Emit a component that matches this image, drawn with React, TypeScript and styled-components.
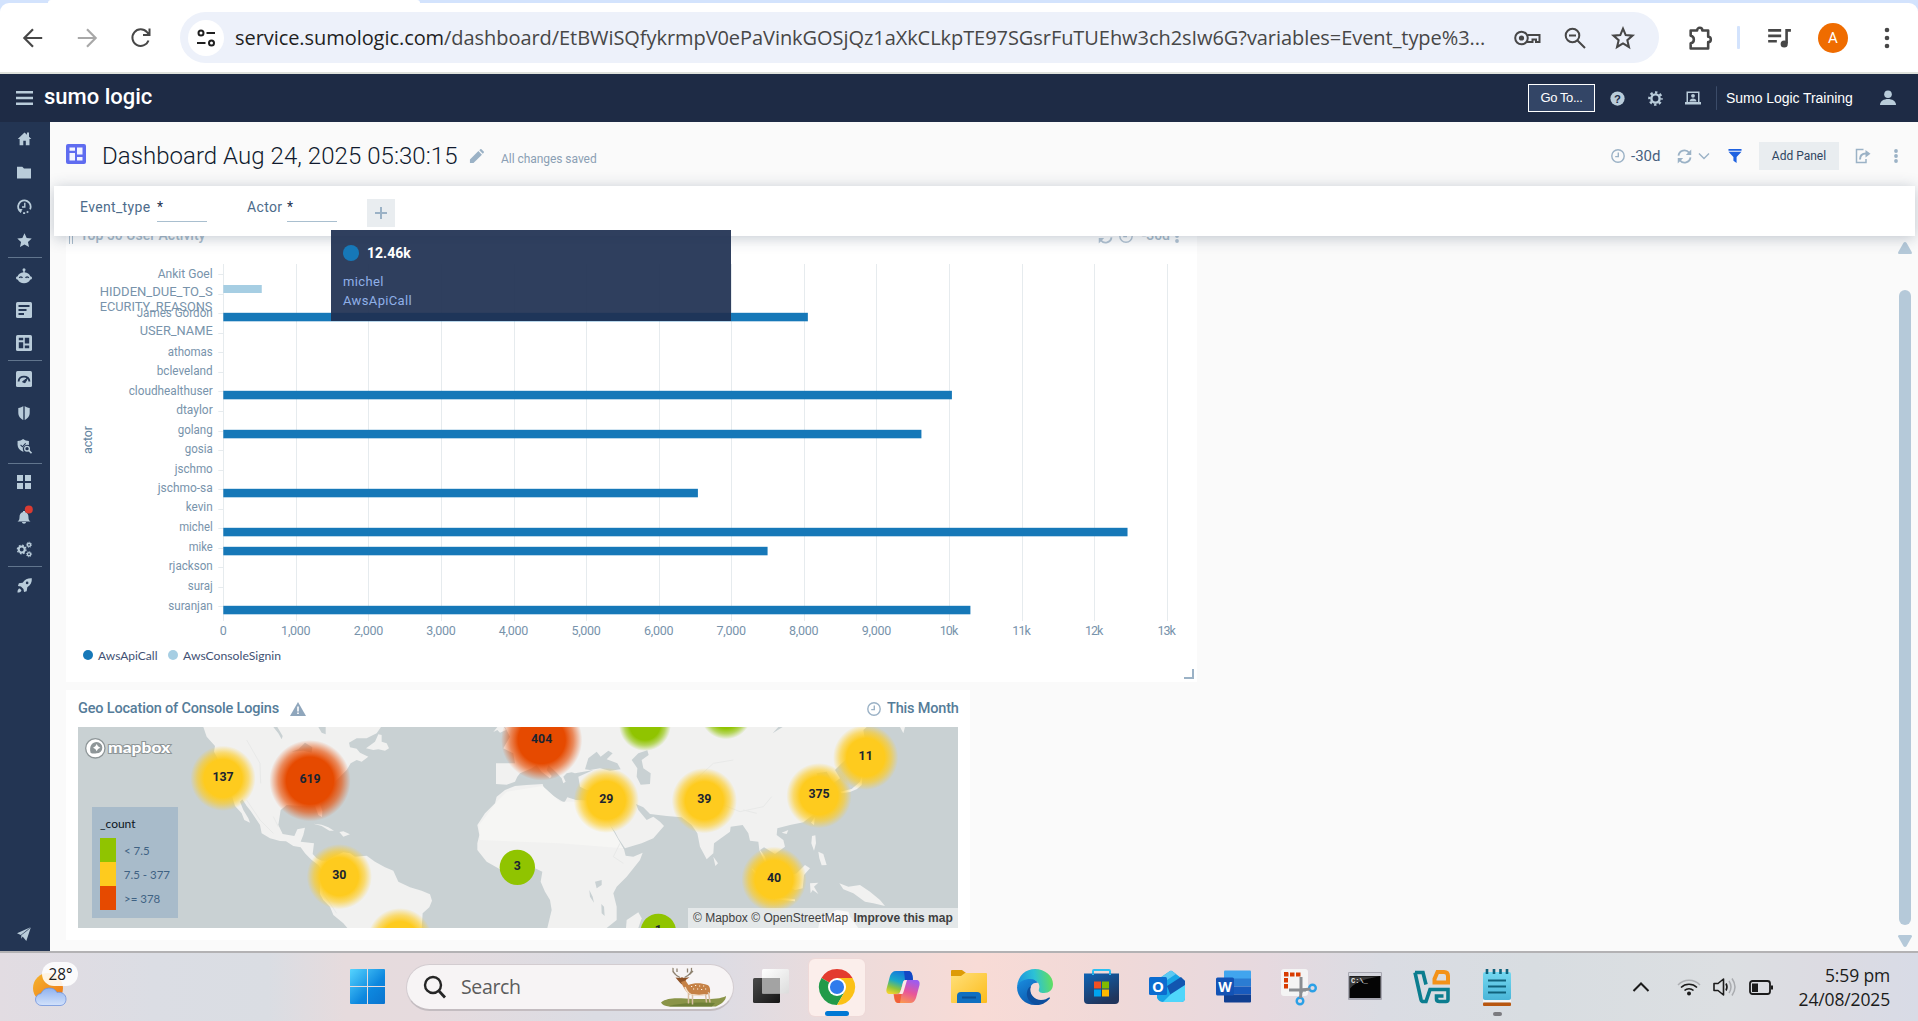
import React from "react";
import styled, { createGlobalStyle } from "styled-components";

const ui = `Roboto, "Liberation Sans", sans-serif`;
const arial = `"Liberation Sans", Arial, sans-serif`;
const win = `"Open Sans", "Noto Sans", sans-serif`;

const Global = createGlobalStyle`
  *, *::before, *::after { box-sizing: border-box; }
  body { margin: 0; background: #fafafa; font-family: ${ui}; overflow: hidden; }
  svg { display: block; flex: none; overflow: visible; }
`;

const Screen = styled.div`
  width: 1918px;
  height: 1021px;
  display: flex;
  flex-direction: column;
  overflow: hidden;
`;

const Row = styled.div<{ $ml?: number; $gap?: number }>`
  display: flex;
  align-items: center;
  flex: none;
  margin-left: ${(p) => p.$ml ?? 0}px;
  gap: ${(p) => p.$gap ?? 0}px;
`;

const Push = styled.div`
  flex: 1;
`;

const Slot = styled.div<{ $w: number }>`
  width: ${(p) => p.$w}px;
  flex: none;
  display: flex;
  align-items: center;
  justify-content: center;
`;

/* ---------- browser chrome ---------- */

const TabStrip = styled.div`
  height: 3px;
  flex: none;
  background: #d3e3fd;
  padding-left: 48px;
`;
const ActiveTab = styled.div`
  width: 372px;
  height: 3px;
  background: #fff;
  border-radius: 3px 3px 0 0;
`;
const StripBack = styled.div`
  background: #d3e3fd;
  flex: none;
`;
const BrowserBar = styled.div`
  height: 69px;
  background: #fff;
  border-radius: 9px 9px 0 0;
  display: flex;
  align-items: center;
`;
const ChromeEdge = styled.div`
  height: 2px;
  flex: none;
  background: #dfe2dc;
`;
const Omnibox = styled.div`
  width: 1479px;
  height: 51px;
  border-radius: 26px;
  background: #edf1fa;
  display: flex;
  align-items: center;
  padding-left: 8px;
`;
const SiteInfo = styled.div`
  width: 36px;
  height: 36px;
  flex: none;
  border-radius: 50%;
  background: #fff;
  display: flex;
  align-items: center;
  justify-content: center;
`;
const Url = styled.div`
  margin-left: 11px;
  width: 1277px;
  flex: none;
  white-space: nowrap;
  font: 400 20px/28px ${win};
  letter-spacing: -0.06px;
  color: #474747;
  b {
    font-weight: 400;
    color: #1f1f1f;
  }
`;
const Avatar = styled.div`
  width: 30px;
  height: 30px;
  border-radius: 50%;
  background: #ef6c00;
  color: #fff;
  font: 400 15px/30px ${ui};
  text-align: center;
`;
const VRule = styled.div<{ $h: number; $w: number; $c: string }>`
  width: ${(p) => p.$w}px;
  height: ${(p) => p.$h}px;
  background: ${(p) => p.$c};
  border-radius: 1px;
  flex: none;
`;

/* ---------- app header ---------- */

const Header = styled.header`
  height: 48px;
  flex: none;
  background: #1e2b45;
  display: flex;
  align-items: center;
  padding-left: 16px;
`;
const Brand = styled.div`
  margin: -2px 0 0 11px;
  font: 500 22px/28px ${ui};
  letter-spacing: 0;
  color: #fff;
`;
const GoTo = styled.div`
  width: 67px;
  height: 28px;
  border: 1px solid #fff;
  background: #334566;
  color: #fff;
  font: 400 13px/26px ${arial};
  letter-spacing: -0.4px;
  text-align: center;
`;
const Account = styled.div`
  width: 129px;
  white-space: nowrap;
  font: 400 14px/20px ${arial};
  letter-spacing: -0.05px;
  color: #fff;
`;

/* ---------- body ---------- */

const Body = styled.div`
  height: 829px;
  flex: none;
  display: flex;
`;
const Side = styled.nav`
  width: 50px;
  background: #233553;
  display: flex;
  flex-direction: column;
  align-items: center;
  padding: 0 2px 0 0;
`;
const SideItem = styled.div`
  height: 33.8px;
  flex: none;
  display: flex;
  align-items: center;
  justify-content: center;
`;
const SideRule = styled.div`
  width: 34px;
  height: 1px;
  flex: none;
  margin: 0 0 0.7px 2px;
  background: #61758d;
`;
const Main = styled.main`
  flex: 1;
  background: #fafafa;
  display: flex;
  flex-direction: column;
  min-width: 0;
  overflow: hidden;
`;
const TitleBar = styled.div`
  height: 64px;
  flex: none;
  display: flex;
  align-items: center;
  padding: 4px 0 0 16px;
`;
const DashMark = styled.div`
  margin-top: -4px;
`;
const Title = styled.h1`
  margin: 0 0 0 16px;
  width: 359px;
  white-space: nowrap;
  font: 300 24px/30px ${ui};
  letter-spacing: 0.05px;
  color: #101a2e;
`;
const Saved = styled.div`
  margin: 6px 0 0 17px;
  font: 400 12px/16px ${ui};
  letter-spacing: -0.05px;
  color: #8b9fb4;
`;
const Range = styled.div`
  font: 400 15px/18px ${ui};
  color: #47617f;
  width: 31px;
  white-space: nowrap;
`;
const AddPanel = styled.div`
  width: 80px;
  height: 28px;
  background: #e9edf0;
  color: #2f4561;
  font: 400 12px/28px ${ui};
  text-align: center;
`;
const FilterBar = styled.div`
  height: 50px;
  flex: none;
  margin: 0 3px 0 4px;
  background: #fff;
  box-shadow: 0 2px 14px rgba(40, 60, 90, 0.28);
  z-index: 2;
  display: flex;
  align-items: flex-start;
  padding: 13px 0 0 26px;
`;
const FilterName = styled.div<{ $w: number }>`
  width: ${(p) => p.$w}px;
  margin-top: -1px;
  font: 400 14px/18px ${ui};
  letter-spacing: 0.35px;
  color: #4d6c8b;
  white-space: nowrap;
`;
const FilterValue = styled.div`
  width: 50px;
  height: 24px;
  margin-top: -1px;
  padding-bottom: 1px;
  border-bottom: 1px solid #a9bfcf;
  font: 400 14px/18px ${ui};
  color: #1f3350;
`;
const Plus = styled.div`
  width: 28px;
  height: 28px;
  background: #e9edf0;
  display: flex;
  align-items: center;
  justify-content: center;
`;
const Scroller = styled.div`
  flex: 1;
  min-height: 0;
  display: flex;
`;
const Panels = styled.div`
  flex: 1;
  padding-left: 16px;
`;
const ChartPanel = styled.section`
  width: 1131px;
  height: 458px;
  margin-top: -12px;
  background: #fff;
  display: flex;
  flex-direction: column;
`;
const GhostHead = styled.div`
  height: 24px;
  flex: none;
  display: flex;
  align-items: center;
  padding-left: 3px;
  color: #a9bccb;
`;
const GhostTitle = styled.div<{ $ml?: number }>`
  margin: -2px 0 0 ${(p) => p.$ml ?? 0}px;
  font: 500 14px/18px ${ui};
`;
const MapPanel = styled.section`
  width: 904px;
  height: 250px;
  margin-top: 8px;
  background: #fff;
  padding: 0 12px;
  display: flex;
  flex-direction: column;
`;
const MapHead = styled.div`
  height: 37px;
  display: flex;
  align-items: center;
  color: #557c99;
`;
const PanelTitle = styled.div<{ $w: number }>`
  width: ${(p) => p.$w}px;
  white-space: nowrap;
  font: 500 14.5px/18px ${ui};
  letter-spacing: -0.18px;
`;
const MapBox = styled.div`
  position: relative;
  width: 880px;
  height: 201px;
  overflow: hidden;
  background: #c9d1d3;
`;
const MapLegend = styled.div`
  position: absolute;
  left: 14px;
  top: 80px;
  width: 86px;
  height: 111px;
  background: #a8bbca;
  padding: 8px 8px 0;
  font: 400 11.5px/17px Lato, sans-serif;
  color: #0c1522;
`;
const LegendRow = styled.div<{ $c: string }>`
  height: 24px;
  display: flex;
  align-items: center;
  gap: 8px;
  color: #3f6283;
  white-space: nowrap;
  &::before {
    content: "";
    width: 16px;
    height: 24px;
    background: ${(p) => p.$c};
  }
`;
const LegendTitle = styled.div`
  height: 23px;
  font-size: 12px;
`;
const Attribution = styled.div`
  position: absolute;
  right: 0;
  bottom: 0;
  width: 270px;
  height: 20px;
  background: rgba(255, 255, 255, 0.5);
  color: #404040;
  font: 400 12px/20px ${arial};
  white-space: nowrap;
  padding-left: 5px;
  b {
    margin-left: 2px;
  }
`;
const ScrollTrack = styled.div`
  width: 24px;
  margin-right: 3px;
  display: flex;
  flex-direction: column;
  align-items: center;
  padding: 6px 0 3px 3px;
`;
const Thumb = styled.div`
  width: 12px;
  height: 635px;
  margin: 36px 0 10px;
  border-radius: 6px;
  background: #b5c9d9;
`;
const Tooltip = styled.div`
  position: absolute;
  left: 331px;
  top: 230px;
  z-index: 5;
  width: 400px;
  height: 91px;
  background: rgba(31, 48, 82, 0.93);
  color: #8fb0e8;
  padding: 13px 12px;
  font: 400 13px/19px ${ui};
  letter-spacing: 0.35px;
`;
const TipValue = styled.div`
  display: flex;
  align-items: center;
  gap: 8px;
  height: 20px;
  margin-bottom: 9px;
  font-weight: 700;
  font-size: 14px;
  letter-spacing: 0;
  color: #fff;
  &::before {
    content: "";
    width: 16px;
    height: 16px;
    border-radius: 50%;
    background: #1678b8;
  }
`;

/* ---------- task bar ---------- */

const TaskBar = styled.footer`
  height: 70px;
  flex: none;
  border-top: 2px solid #b3b2b4;
  background: linear-gradient(
    90deg,
    #e2dce2 0%,
    #dbdde4 8%,
    #dadde3 14%,
    #e6dbdd 18%,
    #e6dbde 22%,
    #dbdce3 31%,
    #dcdce4 37%,
    #eedbda 45%,
    #f8dbd6 51%,
    #f0d9d8 58%,
    #e6d9df 66%,
    #dadce3 72%,
    #d8dde1 80%,
    #dcdfe2 90%,
    #dcdbe2 95%,
    #d8dbe6 100%
  );
  display: flex;
  align-items: center;
`;
const Weather = styled.div`
  width: 300px;
  padding: 0 0 5px 30px;
  margin-right: 34px;
`;
const SearchBox = styled.div`
  width: 328px;
  height: 47px;
  margin: 0 4px 0 6px;
  border-radius: 24px;
  border: 1px solid #d3ccd0;
  border-bottom: 2px solid #c3bcc0;
  background: #f7f4f5;
  display: flex;
  align-items: center;
  padding: 0 6px 0 16px;
  font: 400 19.5px/28px ${win};
  letter-spacing: -0.35px;
  color: #5c5c5c;
`;
const TaskItem = styled.div<{ $active?: boolean; $drop?: number }>`
  width: ${(p) => (p.$active ? 56 : 66)}px;
  height: 57px;
  margin: 0 ${(p) => (p.$active ? 5 : 0)}px;
  border-radius: 6px;
  background: ${(p) => (p.$active ? "#fbeeeb" : "none")};
  box-shadow: ${(p) => (p.$active ? "0 0 0 1px #eed9d8" : "none")};
  display: flex;
  flex-direction: column;
  align-items: center;
  padding-top: ${(p) => 10 + (p.$drop ?? 0)}px;
`;
const Running = styled.div<{ $w: number; $c: string }>`
  width: ${(p) => p.$w}px;
  height: 5px;
  margin-top: 6px;
  border-radius: 3px;
  background: ${(p) => p.$c};
`;
const Clock = styled.div`
  width: 100px;
  margin: -1px 28px 0 17px;
  text-align: right;
  font: 400 17.5px/24px ${win};
  letter-spacing: -0.15px;
  color: #1b1b1b;
`;

/* ---------- icons ---------- */

type IconProps = { s?: number; c?: string; children?: React.ReactNode; vb?: string; h?: number };
const Fill = ({ s = 16, h, c = "#b9ccda", vb = "0 0 16 16", children }: IconProps) => (
  <svg width={s} height={h ?? s} viewBox={vb} fill={c}>{children}</svg>
);
const Line = ({ s = 24, h, c = "#474747", vb = "0 0 24 24", children }: IconProps) => (
  <svg width={s} height={h ?? s} viewBox={vb} fill="none" stroke={c} strokeWidth="2">{children}</svg>
);

const ClockIcon = ({ s = 14, c = "#9bb2c6" }: IconProps) => (
  <Line s={s} c={c} vb="0 0 14 14"><g strokeWidth="1.4"><circle cx="7" cy="7" r="6.2" /><path d="M7.3 3.5V7.6H4.2" /></g></Line>
);
const RefreshIcon = ({ s = 15, c = "#9bb2c6" }: IconProps) => (
  <Line s={s} c={c} vb="0 0 16 16">
    <path d="M1.6 7A6.4 6.4 0 0 1 13 4M14.4 9A6.4 6.4 0 0 1 3 12" strokeWidth="2" />
    <path d="M15.200 0.600V6.400H9.400ZM.8 15.400V9.600H6.600Z" fill={c} stroke="none" />
  </Line>
);
const DotsIcon = ({ c = "#9bb2c6", r = 1.9, gap = 5 }: { c?: string; r?: number; gap?: number }) => (
  <svg width="6" height={gap * 2 + 6} fill={c}>
    {[0, 1, 2].map((i) => <circle key={i} cx="3" cy={3 + i * gap} r={r} />)}
  </svg>
);
const DashGlyph = ({ bg, fg, s = 16 }: { bg: string; fg: string; s?: number }) => (
  <svg width={s} height={s} viewBox="0 0 20 20">
    <rect width="20" height="20" rx="2" fill={bg} />
    <path d="M3.5 3.5h5.5v3.200H3.5zM3.500 9h5.500v7.500H3.5zM11 3.500h5.500v7H11zM11 13h5.500v3.500H11z" fill={fg} />
  </svg>
);

const Gear = ({ s = 16, c = "#b9ccda" }: IconProps) => (
  <svg width={s} height={s} viewBox="0 0 16 16">
    <g fill="none" stroke={c}>
      <circle cx="8" cy="8" r="4.400" strokeWidth="2.600" />
      <circle cx="8" cy="8" r="6.500" strokeWidth="2.600" strokeDasharray="2.550 2.550" strokeDashoffset="1.270" />
    </g>
  </svg>
);

const HomeIcon = () => (
  <Fill s={15}><path d="M8 1.600L.8 8.600h2V15.200h3.900V10.400h2.700v4.800h3.900V8.600h2L12.800 6V1.700h-2.200v2.200z" /></Fill>
);
const FolderIcon = () => <Fill s={14} h={13} vb="0 0 14 13"><path d="M0 .7h5.300L7 2.500h7v10H0z" /></Fill>;
const HistoryIcon = () => (
  <Line s={15} c="#b9ccda" vb="0 0 16 16">
    <path d="M4.500 14A6.700 6.700 0 1 1 14 11" strokeWidth="1.900" />
    <path d="M8.300 4v4.500H5.300" strokeWidth="1.500" />
    <path d="M6.500 15h2.200M10.300 14.300l1.800-.9" strokeWidth="1.800" />
    <path d="M2 10.500l4 .5-2.500 3.500z" fill="#b9ccda" stroke="none" />
  </Line>
);
const StarIcon = () => <Fill s={15}><path d="M8 .3l2.300 5 5.400.6-4 3.700 1.100 5.400L8 12.300 3.200 15l1.100-5.400-4-3.700 5.400-.6z" /></Fill>;
const RobotIcon = () => (
  <Fill>
    <circle cx="8" cy="1.800" r="1.500" /><path d="M7.300 2h1.400v4H7.300z" />
    <path d="M8 4.500c4 0 5.800 1.900 6.200 3.800 1 .2 1.800.8 1.800 1.700 0 1-.8 1.500-1.900 1.700-.8 2-3.200 3.600-6.100 3.600s-5.300-1.600-6.100-3.600C.8 11.500 0 11 0 10c0-.9.8-1.500 1.800-1.700C2.200 6.400 4 4.500 8 4.500z" />
    <path d="M3.400 10c.3-1.500 2.600-1.500 2.900 0M9.700 10c.3-1.500 2.600-1.500 2.900 0" stroke="#233553" strokeWidth="1.400" fill="none" />
  </Fill>
);
const LogsIcon = () => (
  <Fill><rect width="16" height="16" rx="1.500" /><path d="M2.500 4h11M2.500 8h8M2.500 12h5.500" stroke="#233553" strokeWidth="1.900" /></Fill>
);
const GaugeIcon = () => (
  <Fill><rect width="16" height="16" rx="1.500" /><path d="M2.600 10.500C2.600 4 13.400 4 13.400 10.500" stroke="#233553" strokeWidth="1.900" fill="none" /><path d="M6.500 10.800L12 6.600 9 11.800z" fill="#233553" stroke="#233553" /></Fill>
);
const ShieldIcon = () => (
  <Fill s={14} vb="0 0 14 14"><path d="M6.300 0v14C3.500 12.700 1.300 10.500 1.300 6.500V2C3.500 1.800 5 1.200 6.300 0zM7.700 0v14c2.800-1.300 5-3.500 5-7.500V2C10.500 1.800 9 1.200 7.700 0z" /></Fill>
);
const ShieldSearchIcon = () => (
  <Fill s={15}>
    <path d="M6.500 0C8 1.300 10.500 2 12.700 2v4.500A4.600 4.600 0 0 0 7 13.200l-.5.3C3 12 .6 9.500.6 6V2C3 2 5 1.300 6.500 0z" />
    <path d="M3.800 6.300l2 2 3.400-3.600" stroke="#233553" strokeWidth="1.200" fill="none" />
    <circle cx="10.700" cy="10.300" r="2.500" fill="none" stroke="#b9ccda" strokeWidth="1.400" />
    <path d="M12.500 12.200l3 3" stroke="#b9ccda" strokeWidth="1.800" />
  </Fill>
);
const GridIcon = () => (
  <Fill s={14} vb="0 0 14 14"><path d="M0 0h6v6H0zM8 0h6v6H8zM0 8h6v6H0zM8 8h6v6H8z" /></Fill>
);
const BellIcon = () => (
  <Fill s={16}>
    <path d="M7 3h2v1c2.600.8 3.500 2.800 3.500 5.500 0 2 .5 3 2 4H1.500c1.500-1 2-2 2-4C3.500 6.800 4.400 4.800 7 4zM6 14h4c0 2.200-4 2.200-4 0z" />
    <circle cx="12.800" cy="1.500" r="4" fill="#d93b32" />
  </Fill>
);
const GearsIcon = () => (
  <svg width="15" height="15" viewBox="0 0 16 16" fill="none" stroke="#b9ccda">
    <circle cx="5" cy="8" r="3.200" strokeWidth="2.200" /><circle cx="5" cy="8" r="4.600" strokeWidth="1.400" strokeDasharray="1.800 1.800" />
    <circle cx="12.800" cy="3" r="1.700" strokeWidth="1.500" /><circle cx="12.800" cy="3" r="2.800" strokeWidth=".9" strokeDasharray="1.100 1.100" />
    <circle cx="12.800" cy="13" r="1.700" strokeWidth="1.500" /><circle cx="12.800" cy="13" r="2.800" strokeWidth=".9" strokeDasharray="1.100 1.100" />
  </svg>
);
const RocketIcon = () => (
  <Fill s={15}>
    <path d="M15.800.3c.3 4-1.300 7.500-4.800 9.600L10.300 14 7.500 15l-.6-3.200L4.200 9.100 1 8.500 2 5.700l4-.7C8.300 1.600 11.800 0 15.800.3z" />
    <circle cx="10.800" cy="5.200" r="1.400" fill="#233553" /><path d="M.5 15.500c0-2.500.8-4 2.500-4.200l1.700 1.700c-.2 1.700-1.700 2.500-4.200 2.500z" />
  </Fill>
);
const SendIcon = () => <Fill s={14} vb="0 0 14 14"><path d="M13.500.3L0 6.300l3.800 1.600zM13.800.6L4.800 8.600 9.300 14zM12 2.200L4.300 8.200v3.600l1.200-2z" /></Fill>;

/* ---------- chart ---------- */

const X0 = 157.3;
const STEP = 72.57;
const Y0 = 26.3;
const ROWH = 19.53;

type Cat = { label: string; w: number; dy?: number; v?: number; light?: boolean };
const cats: Cat[] = [
  { label: "Ankit Goel", w: 55 },
  { label: "HIDDEN_DUE_TO_S", w: 113, v: 530, light: true, dy: -0.8 },
  { label: "James Gordon", w: 76, v: 8055 },
  { label: "USER_NAME", w: 73, dy: -0.6 },
  { label: "athomas", w: 45 },
  { label: "bcleveland", w: 56 },
  { label: "cloudhealthuser", w: 84, v: 10040 },
  { label: "dtaylor", w: 36.5 },
  { label: "golang", w: 35, v: 9620 },
  { label: "gosia", w: 28 },
  { label: "jschmo", w: 38 },
  { label: "jschmo-sa", w: 55, v: 6540 },
  { label: "kevin", w: 27, dy: -0.6 },
  { label: "michel", w: 33.5, v: 12460 },
  { label: "mike", w: 24, v: 7500 },
  { label: "rjackson", w: 44 },
  { label: "suraj", w: 25 },
  { label: "suranjan", w: 44.5, v: 10295 },
];
const axis = ["0", "1,000", "2,000", "3,000", "4,000", "5,000", "6,000", "7,000", "8,000", "9,000", "10k", "11k", "12k", "13k"];

/* Plot area: drawn under the panel's head row, in pixels from the panel's left edge */
const Chart = () => (
  <svg width="1131" height="434" fontFamily={ui} fontSize="12.5" fill="#7893ab">
    {axis.map((a, i) => (
      <g key={a}>
        <rect x={Math.round(X0 + i * STEP)} y="16" width="1" height="357" fill="#e6ebee" />
        <text x={X0 + i * STEP} y="387" textAnchor="middle" textLength={a.length === 5 ? 29.5 : a.length === 3 ? 18.5 : 7}>{a}</text>
      </g>
    ))}
    {cats.map((c, i) => {
      const y = Y0 + i * ROWH;
      return (
        <g key={c.label}>
          <rect x={X0 - 5} y={Math.round(y)} width="5" height="1" fill="#e6ebee" />
          <text x="146.7" y={y + 3.2 + (c.dy ?? 0)} textAnchor="end" textLength={c.w} lengthAdjust="spacingAndGlyphs">{c.label}</text>
          {c.v && (
            <rect x={X0} y={Math.round(y - 0.3) + (c.light ? -9 : -0.2)} width={(c.v * STEP) / 1000} height={c.light ? 8 : 8.5} fill={c.light ? "#a6cee3" : "#1678b8"} />
          )}
        </g>
      );
    })}
    <text x="146.4" y="63" textAnchor="end" textLength="112.7" lengthAdjust="spacingAndGlyphs">ECURITY_REASONS</text>
    <text transform="translate(26,192) rotate(-90)" textAnchor="middle" fill="#6283a0" textLength="28">actor</text>
    <circle cx="22" cy="407" r="5" fill="#1678b8" />
    <circle cx="107" cy="407" r="5" fill="#a6cee3" />
    <g fontFamily="Lato, sans-serif" fontSize="11.5" fill="#3f5173">
      <text x="32" y="412" textLength="59.5" lengthAdjust="spacingAndGlyphs">AwsApiCall</text>
      <text x="117" y="412" textLength="98" lengthAdjust="spacingAndGlyphs">AwsConsoleSignin</text>
    </g>
    <path d="M1118 430H1127V421" fill="none" stroke="#9bb2c6" strokeWidth="2" />
  </svg>
);

/* ---------- map ---------- */

const land = [
  /* the Americas */
  "M430 51L440 80 465 108 462 125 475 150 472 190 485 225 515 255 525 288 545 310 553 330 570 338 565 325 550 300 540 275 547 268 560 288 572 303 582 318 600 345 605 370 630 385 660 393 678 394 700 408 722 412 735 430 748 443 758 452 775 465 785 480 780 510 780 552 790 570 810 590 820 615 850 640 862 654H1085L1088 610 1108 592 1116 572 1110 553 1085 542 1050 532 1015 515 1000 482 975 472 945 455 920 437 885 440 870 430 850 427 820 440 800 452 785 452 770 445 758 432 762 400 722 395 730 375 735 353 712 358 703 378 668 372 655 345 662 300 680 285 715 287 765 287 775 315 786 321 787 303 780 282 800 250 830 210 860 180 872 160 890 150 905 155 925 140 900 128 890 116 870 112 867 98 890 85 920 85 950 70 963 51Z",
  "M918 115L945 95 955 73 965 75 965 95 980 100 987 115 975 122 955 118 940 120Z",
  "M760 341L785 344 805 352 822 362 808 362 785 348ZM838 366L850 364 870 373 850 380Z",
  /* Africa */
  "M1335 240L1365 228 1400 225 1448 222 1453 240 1480 258 1513 278 1522 262 1548 270 1610 272 1640 330 1650 360 1670 390 1692 418 1697 437 1720 440 1748 428 1740 450 1700 500 1670 530 1660 550 1670 590 1670 630 1640 654H1462L1475 600 1470 570 1455 545 1442 515 1447 485 1425 475 1390 470 1350 480 1320 478 1280 455 1252 420 1252 400 1258 375 1252 345 1275 310 1305 280 1310 260Z",
  "M1698 654L1700 630 1735 607 1745 625 1735 654Z",
  /* Eurasia */
  "M1335 51L1350 80 1330 115 1360 130 1365 160 1308 160 1308 222 1340 224 1365 215 1372 200 1380 190 1415 175 1430 165 1445 185 1470 205 1475 198 1460 180 1465 165 1490 188 1505 205 1510 220 1517 215 1510 200 1520 190 1535 187 1545 190 1600 180 1555 200 1560 230 1580 240 1610 240 1615 262 1630 320 1645 340 1665 365 1675 385 1695 415 1745 400 1780 385 1812 348 1800 335 1780 320 1760 330 1735 300 1728 282 1750 292 1770 312 1820 318 1865 322 1895 345 1912 370 1920 410 1940 448 1960 430 1962 400 2010 365 2012 350 2048 345 2065 370 2070 392 2095 395 2098 420 2112 450 2125 475 2115 440 2100 420 2112 412 2145 432 2175 410 2170 390 2150 375 2152 355 2190 345 2230 337 2265 310 2285 285 2285 240 2275 215 2270 190 2300 185 2320 220 2340 205 2325 180 2345 160 2380 130 2415 90 2410 60 2420 51Z",
  "M1300 66L1312 51H1332L1338 60 1320 68 1312 60Z",
  /* Japan, Taiwan, the Philippines */
  "M2340 245L2375 237 2400 215 2408 190 2405 225 2390 238 2370 246 2345 250ZM2253 338L2265 320 2262 345ZM2256 378L2266 376 2268 400 2262 422 2254 400ZM2275 425L2290 432 2300 465 2285 466 2278 445ZM2165 368L2185 360 2180 372Z",
  /* Indonesia, Papua, Australia */
  "M2075 475L2095 490 2140 530 2142 550 2120 540 2095 510ZM2180 500L2210 490 2235 465 2250 475 2232 495 2228 535 2205 540 2185 530ZM2250 520L2275 518 2262 530 2275 552 2258 540 2252 550ZM2140 560L2205 568 2205 574 2145 568ZM2338 520L2365 530 2400 525 2430 545 2460 570 2475 588 2440 580 2415 575 2380 550 2350 538ZM2275 654L2280 625 2330 600 2365 605 2370 620 2395 654ZM1960 440L1974 460 1966 468ZM2520 51H2535L2530 70Z",
];
const water = [
  "M1575 178L1585 145 1610 125 1622 140 1645 122 1658 130 1640 148 1672 160 1682 178 1650 182 1620 175 1590 180Z",
  "M1715 150L1735 130 1762 121 1766 135 1745 150 1750 175 1772 190 1770 222 1742 224 1730 200 1732 175Z",
  "M695 125L715 118 735 98 757 112 755 128 730 122Z",
  "M640 51H652L668 78 665 88 655 70ZM775 51H797V73L785 68Z",
  "M1605 515L1625 510 1625 525 1610 535ZM1588 540L1598 560 1602 578 1590 560ZM1624 582L1632 590 1634 618 1625 610ZM2138 70L2155 51H2168Z",
];

type Blob = { x: number; y: number; r: number; c: "y" | "r" | "g" | "s"; t?: string };
const blobs: Blob[] = [
  { x: 489, y: 205, r: 98, c: "y", t: "137" },
  { x: 750, y: 212, r: 122, c: "r", t: "619" },
  { x: 838, y: 500, r: 98, c: "y", t: "30" },
  { x: 1020, y: 692, r: 98, c: "y" },
  { x: 1372, y: 472, r: 53, c: "s", t: "3" },
  { x: 1445, y: 90, r: 122, c: "r", t: "404" },
  { x: 1755, y: 45, r: 78, c: "g" },
  { x: 1998, y: 10, r: 78, c: "g" },
  { x: 1639, y: 271, r: 98, c: "y", t: "29" },
  { x: 1933, y: 272, r: 98, c: "y", t: "39" },
  { x: 2417, y: 142, r: 98, c: "y", t: "11" },
  { x: 2277, y: 257, r: 98, c: "y", t: "375" },
  { x: 2142, y: 508, r: 98, c: "y", t: "40" },
  { x: 1795, y: 664, r: 53, c: "s", t: "1" },
];
const tone = { y: "#fecb1e", r: "#e64a00", g: "#90c400" };

const WorldMap = () => (
  <svg width="880" height="201" viewBox="54 51 2640 603">
    <defs>
      {(["y", "r", "g"] as const).map((k) => (
        <radialGradient id={k} key={k}>
          <stop offset="0.58" stopColor={tone[k]} />
          <stop offset="0.78" stopColor={tone[k]} stopOpacity="0.62" />
          <stop offset="1" stopColor={tone[k]} stopOpacity="0" />
        </radialGradient>
      ))}
    </defs>
    {land.map((d) => <path key={d} d={d} fill="#f1f1f0" />)}
    <path d="M1340 245L1448 228 1500 275 1610 275 1690 415 1500 400 1260 390 1258 345 1310 275Z" fill="#f6f6f4" />
    <g stroke="#e8e9e8" strokeWidth="3" fill="none">
      <path d="M560 90L600 160 602 220M640 320L655 350M560 270L600 330 640 370M800 480L790 550 830 610M1900 215L1960 160 2020 150M1990 285L2040 305 2110 290 2135 260M2050 300L2090 310M1680 400L1660 440 1690 460" />
    </g>
    {water.map((d) => <path key={d} d={d} fill="#c9d1d3" />)}
    {blobs.map((b) => (
      <g key={`${b.x}`}>
        <circle cx={b.x} cy={b.y} r={b.r} fill={b.c === "s" ? "#90c400" : `url(#${b.c})`} />
        {b.t && (
          <text x={b.x} y={b.y + 8} textAnchor="middle" fontFamily={ui} fontWeight="700" fontSize="37" fill="#1b2430">{b.t}</text>
        )}
      </g>
    ))}
    <g>
      <circle cx="106" cy="115" r="29" fill="#fff" stroke="#8e9698" strokeWidth="4" />
      <path d="M92 129c-6-22 6-33 18-33a17 17 0 0 1 0 34c-6 1-12 1-18-1z" fill="#8e9698" />
      <path d="M110 102l4 7 7 4-7 4-4 7-4-7-7-4 7-4z" fill="#fff" />
      <text x="144" y="130" fontFamily="Lato, sans-serif" fontWeight="900" fontSize="46" fill="#fff" stroke="#8e9698" strokeWidth="6" paintOrder="stroke" textLength="187" lengthAdjust="spacingAndGlyphs">mapbox</text>
    </g>
  </svg>
);

/* ---------- task bar drawings ---------- */

const WeatherIcon = () => (
  <svg width="50" height="50" viewBox="0 0 50 50">
    <defs>
      <linearGradient id="sun" x1="0" y1="0" x2="1" y2="1"><stop offset="0" stopColor="#f5b52e" /><stop offset="1" stopColor="#ee7414" /></linearGradient>
      <linearGradient id="cld" x1="0" y1="0" x2="0" y2="1"><stop offset="0" stopColor="#8fb2ef" /><stop offset="1" stopColor="#d3e2fb" /></linearGradient>
    </defs>
    <circle cx="18" cy="28" r="15" fill="url(#sun)" />
    <path d="M12 45.500a6 6 0 0 1-1-12 9 9 0 0 1 16-1c5-1 9 2 9 6.500s-3 6.500-6 6.500z" fill="url(#cld)" stroke="#6e93dd" strokeWidth=".8" />
    <rect x="12" y="2" width="36" height="24" rx="12" fill="#fff" fillOpacity=".88" />
    <text x="18.500" y="19.500" fontFamily={win} fontSize="16.500" fill="#1b1b1b" textLength="24" lengthAdjust="spacingAndGlyphs">28°</text>
  </svg>
);
const WindowsIcon = () => (
  <svg width="35" height="35" viewBox="0 0 35 35">
    <defs><linearGradient id="wn" gradientUnits="userSpaceOnUse" x1="0" y1="0" x2="35" y2="35"><stop offset="0" stopColor="#55d4ff" /><stop offset=".6" stopColor="#0d87de" /><stop offset="1" stopColor="#0a74cf" /></linearGradient></defs>
    <path d="M0 1q0-1 1-1h16v17H0zM18 0h16q1 0 1 1v16H18zM0 18h17v17H1q-1 0-1-1zM18 18h17v16q0 1-1 1H18z" fill="url(#wn)" />
  </svg>
);
const Deer = () => (
  <svg width="66" height="40" viewBox="0 0 66 40">
    <path d="M0 35.500C8 29 22 32 32 32s26 1 33-3c0 5-5 8-10 10.500H8C4 39 1 38 0 35.500z" fill="#8a9448" />
    <path d="M8 39q20-5 46-3l-3 3.500H9z" fill="#6f7f38" />
    <path d="M19 10.500C15 9 11 5 12 .8M14.500 7.500L11.500 4M16 5V1.500M23.500 10.500c4-1.500 8-5.500 7-9.700M28.500 7.500l3.500-3.500M26.500 5.500V1.500" stroke="#8e8270" strokeWidth="1.300" fill="none" />
    <path d="M14.500 10.500l4.500.5 2-.8 2 .8 5.500-.7-3.500 2.500-1 3-2 1.500h-1.500l-2-2z" fill="#8f5328" />
    <path d="M20 15l4.500-1.500 3 4.500c5-2 12-2.500 19 0 2.500 1 3 5 2.500 8l-3 1.500-6 1-11-.5c-4-3-7-8-9-13z" fill="#c58146" />
    <path d="M24 20c1.500 4 3 6.500 6 7.500l8 1 6-.8" stroke="#f1dfcb" strokeWidth="1.600" fill="none" />
    <path d="M30 19.500h1.200M34 18.500h1.200M38 19h1.200M42 19h1.200M32 22h1.200M36 22h1.200M40 22.500h1.200M44 22h1.200" stroke="#fff3e2" strokeWidth="1.200" />
    <path d="M27.500 26v10.500M31.500 27.500v10M44.500 27l1 8.500M47.500 25l1.500 10.500" stroke="#d9bfa5" strokeWidth="1.500" />
  </svg>
);
const TaskView = () => (
  <svg width="36" height="35" viewBox="0 0 36 35">
    <defs>
      <linearGradient id="tv" x1="0" y1="0" x2="1" y2="1"><stop offset="0" stopColor="#4a4a4a" /><stop offset="1" stopColor="#151515" /></linearGradient>
      <linearGradient id="tw" x1="0" y1="0" x2="1" y2="1"><stop offset="0" stopColor="#fff" /><stop offset="1" stopColor="#dcdcdc" /></linearGradient>
    </defs>
    <rect x="0" y="9" width="27" height="25" rx="1.500" fill="url(#tv)" />
    <rect x="9" y="0" width="27" height="24.500" rx="1.500" fill="url(#tw)" />
    <path d="M9 9h18v15.500H9z" fill="#a3a3a3" />
  </svg>
);
const Chrome = () => (
  <svg width="36" height="36" viewBox="0 0 48 48">
    <circle cx="24" cy="24" r="24" fill="#fff" />
    <path d="M24 24L3.200 12A24 24 0 0 1 44.800 12H24z" fill="#e33b2e" />
    <path d="M3.200 12A24 24 0 0 0 24 48l10.400-18-10.400-6z" fill="#229a49" />
    <path d="M44.800 12A24 24 0 0 1 24 48l10.400-18L24 12z" fill="#fbc116" />
    <circle cx="24" cy="24" r="12" fill="#fff" /><circle cx="24" cy="24" r="9.400" fill="#2f7bec" />
  </svg>
);
const Copilot = () => (
  <svg width="34" height="32" viewBox="0 0 34 32">
    <defs>
      <linearGradient id="c1" x1=".6" y1="0" x2=".2" y2="1"><stop offset="0" stopColor="#1474dc" /><stop offset=".45" stopColor="#19a9c8" /><stop offset=".75" stopColor="#8fc43c" /><stop offset="1" stopColor="#f2d32f" /></linearGradient>
      <linearGradient id="c2" x1=".7" y1="0" x2=".3" y2="1"><stop offset="0" stopColor="#9c5cf0" /><stop offset=".5" stopColor="#e8559a" /><stop offset="1" stopColor="#fb9a4e" /></linearGradient>
    </defs>
    <path d="M10 0h12c3 0 4 2 4.500 5l.5 3h-5c-3 0-4 1-5 4l-2 7c-1 3-2 4-5 4H4c-3 0-4-2-3.500-5L4 5C5 2 7 0 10 0z" fill="url(#c1)" />
    <path d="M18 0h4c3 0 4 2 4.500 5l.5 4h-8z" fill="#1347c4" />
    <path d="M24 32H12c-3 0-3.500-3-4-6l-.5-3H10c3 0 4-1 5-4l2-7c1-3 2-3 5-3h8c3 0 4 2 3.500 5L30 27c-1 3-3 5-6 5z" fill="url(#c2)" />
    <path d="M8 23.500h4c2 0 3.500-1 4-3l-2 11.500h-2c-2.500 0-3.600-4-4-8.500z" fill="#f0603a" />
    <path d="M17 11c1-2 2-2 5-2h-1L17.500 21l-1 2h-3.500c2-3 3-8 4-12z" fill="#fbe9e6" />
  </svg>
);
const Explorer = () => (
  <svg width="36" height="35" viewBox="0 0 36 35">
    <defs><linearGradient id="ex" x1="0" y1="0" x2="1" y2="1"><stop offset="0" stopColor="#ffe07a" /><stop offset="1" stopColor="#fcbc1c" /></linearGradient></defs>
    <path d="M0 2q0-1 1-1h10l4 3-3 6H0z" fill="#dd9b06" />
    <path d="M0 7h10l4-3h21q1 0 1 1v28q0 1-1 1H1q-1 0-1-1z" fill="url(#ex)" />
    <path d="M6 34v-7q0-4 4-4h16q4 0 4 4v7z" fill="#0f6fc0" /><path d="M11 28.500h14" stroke="#0a4f94" strokeWidth="2" />
  </svg>
);
const Edge = () => (
  <svg width="36" height="36" viewBox="0 0 36 36">
    <defs>
      <linearGradient id="e1" x1="0" y1=".5" x2="1" y2=".4"><stop offset="0" stopColor="#1b92dd" /><stop offset=".5" stopColor="#2cc1d6" /><stop offset="1" stopColor="#63e05a" /></linearGradient>
      <linearGradient id="e2" x1="0" y1="0" x2=".6" y2="1"><stop offset="0" stopColor="#1a8ee0" /><stop offset="1" stopColor="#0b56ab" /></linearGradient>
    </defs>
    <path d="M0 18C1 6 9 0 18 0c10 0 18 7 18 15 0 6-4 9-9 9-4 0-6-1.500-5-4 1.500-4-1-9-7-9C9 11 3 13 0 18z" fill="url(#e1)" />
    <path d="M0 18c2-6 8-8 13-8 4 0 7 2 8 4-5-1-8 3-8 7 0 8 8 12 14 13-3 1.500-6 2-9 2C8 36 0 28 0 18z" fill="url(#e2)" />
    <path d="M14 17c-3 8 4 14 10 14 4 0 6-1.500 8-2.500.8-.3 1.300.3.8 1C29 34 24 36 20 36c-8-2-11-8-10-13 .6-3 2-5 4-6z" fill="#0d4f9e" />
  </svg>
);
const Store = () => (
  <svg width="35" height="35" viewBox="0 0 35 35">
    <defs><linearGradient id="st" x1="0" y1="0" x2=".5" y2="1"><stop offset="0" stopColor="#0f63b4" /><stop offset="1" stopColor="#21355c" /></linearGradient></defs>
    <path d="M9 7V2q0-1 1-1h15q1 0 1 1v5" fill="none" stroke="#2bc0f2" strokeWidth="2" />
    <path d="M0 4.500h35V31q0 4-4 4H4q-4 0-4-4z" fill="url(#st)" />
    <path d="M9 6V4.500M26 6V4.500" stroke="#2bc0f2" strokeWidth="2" />
    <path d="M10 12.500h7v7h-7z" fill="#f25022" /><path d="M18 12.500h7v7h-7z" fill="#7fba00" /><path d="M10 20.500h7v7h-7z" fill="#00a4ef" /><path d="M18 20.500h7v7h-7z" fill="#ffb900" />
  </svg>
);
const Outlook = () => (
  <svg width="36" height="34" viewBox="0 0 36 34">
    <path d="M8 10L21 1q1-.7 2 0l13 10v17q0 4-4 4H14q-4 0-6-4z" fill="#1aa5e6" />
    <path d="M8 10L21 1q1-.7 2 0l4 3L12 14z" fill="#5cc9f2" /><path d="M18 16L32 7l4 4v6L22 26z" fill="#1256b0" /><path d="M36 15v13q0 4-4 4H14l8-8z" fill="#4fd6fb" />
    <rect y="7" width="18" height="18" rx="1.500" fill="#0b6cd0" />
    <text x="9" y="21.500" textAnchor="middle" fontFamily={win} fontWeight="700" fontSize="15" fill="#fff">O</text>
  </svg>
);
const Word = () => (
  <svg width="35" height="33" viewBox="0 0 35 33">
    <path d="M8 1.500Q8 .5 9 .5h25q1 0 1 1V9H8z" fill="#41a5ee" /><path d="M8 8.500h27v8H8z" fill="#2b7cd3" /><path d="M8 16.500h27v8H8z" fill="#185abd" /><path d="M8 24.500h27v7q0 1-1 1H9q-1 0-1-1z" fill="#103f91" />
    <rect y="7.500" width="18" height="18" rx="1.500" fill="#1353b5" />
    <text x="9" y="21.500" textAnchor="middle" fontFamily={win} fontWeight="700" fontSize="14" fill="#fff">W</text>
  </svg>
);
const Snip = () => (
  <svg width="36" height="37" viewBox="0 0 36 37">
    <rect width="27" height="27" rx="3" fill="#f4f4f4" />
    <path d="M3 5.500H21M5 3v17" stroke="#d83b01" strokeWidth="4" strokeDasharray="4.500 1.500" fill="none" />
    <path d="M20 8v16M8 21h17" stroke="#8a8d91" strokeWidth="3" />
    <circle cx="31.500" cy="19" r="3.300" fill="none" stroke="#2ba0e6" strokeWidth="2.400" /><circle cx="19" cy="32" r="3.300" fill="none" stroke="#2ba0e6" strokeWidth="2.400" />
    <path d="M21 21l8-1M20 22l-.5 7" stroke="#8a8d91" strokeWidth="3" />
  </svg>
);
const Terminal = () => (
  <svg width="34" height="28" viewBox="0 0 34 28">
    <rect width="34" height="28" rx="1" fill="#a7a7b1" /><rect x="1" y="1" width="32" height="3" fill="#d5d6de" /><rect x="1.500" y="4" width="31" height="22" fill="#050505" />
    <path d="M2 4.500h30c-14 2-24 5-30 12z" fill="#3a3a3a" />
    <text x="3" y="10.500" fontFamily={`"Liberation Mono", monospace`} fontSize="7" fontWeight="700" fill="#e8e8e8">C:\_</text>
  </svg>
);
const VBox = () => (
  <svg width="37" height="34" viewBox="0 0 37 34">
    <path d="M2 2.500h8l3 12M2 2.500l6 27q.5 2 2.500 2h2.500L17 19.500H35v10q0 2-2 2h-6.500q-3 0-3-2.500v-3h7" fill="none" stroke="#0b7d8f" strokeWidth="3.600" />
    <path d="M21.500 12.500V9l3-7H31q4 0 4 4v6.500z" fill="none" stroke="#f39219" strokeWidth="4" />
  </svg>
);
const Notepad = () => (
  <svg width="28" height="37" viewBox="0 0 28 37">
    <defs><linearGradient id="np" x1="0" y1="0" x2="0" y2="1"><stop offset="0" stopColor="#74d8f0" /><stop offset="1" stopColor="#49b5d8" /></linearGradient></defs>
    <rect y="30" width="28" height="3.500" fill="#f4f4f4" /><rect y="33.500" width="28" height="3.500" rx="1" fill="#b8560f" />
    <rect y="3" width="28" height="28" rx="2" fill="url(#np)" />
    <path d="M4 0v5M11 0v5M17.500 0v5M24 0v5" stroke="#10627c" strokeWidth="2.600" />
    <path d="M5 11.500h18M5 17.500h18M5 23.500h18" stroke="#10627c" strokeWidth="1.800" />
  </svg>
);

const App = () => (
  <Screen>
    <Global />
    <TabStrip><ActiveTab /></TabStrip>
    <StripBack>
      <BrowserBar>
        <Row $ml={20}>
          <Slot $w={26}><Line s={26}><path d="M20.500 12H4M12 4L4 12l8 8" /></Line></Slot>
        </Row>
        <Row $ml={28}>
          <Slot $w={26}><Line s={26} c="#a8a8a8"><path d="M3.500 12H20M12 4l8 8-8 8" /></Line></Slot>
        </Row>
        <Row $ml={28}>
          <Slot $w={26}><Line s={24}><path d="M19.500 14.500A8.300 8.300 0 1 1 18 6.200L20.500 9M20.500 2.500V9H14" /></Line></Slot>
        </Row>
        <Row $ml={26}>
          <Omnibox>
            <SiteInfo>
              <Line s={20} c="#1f1f1f" vb="0 0 20 20"><circle cx="5" cy="5" r="2.500" /><path d="M10.500 5H19M1 15h8.500" /><circle cx="15.500" cy="15" r="2.500" /></Line>
            </SiteInfo>
            <Url><b>service.sumologic.com</b>/dashboard/EtBWiSQfykrmpV0ePaVinkGOSjQz1aXkCLkpTE97SGsrFuTUEhw3ch2sIw6G?variables=Event_type%3...</Url>
            <Slot $w={30}>
              <Line s={27} h={18} vb="0 0 27 18"><circle cx="7.500" cy="9" r="6.300" /><circle cx="7.500" cy="9" r="2.600" fill="#474747" stroke="none" /><path d="M13.500 6H25.500V13H22V10.500H18.500V13H13" /></Line>
            </Slot>
            <Slot $w={65}>
              <Line s={24}><circle cx="9.500" cy="9.500" r="6.800" /><path d="M14.500 14.500L22 22M6 9.500h7" /></Line>
            </Slot>
            <Slot $w={32}>
              <Line s={26}><path d="M12 3.300l2.500 6 6.300.5-4.800 4.200 1.500 6.300L12 17l-5.500 3.300L8 14 3.200 9.800l6.300-.5z" strokeWidth="1.900" /></Line>
            </Slot>
          </Omnibox>
        </Row>
        <Row $ml={26}>
          <Slot $w={30}><Line s={28}><path d="M4 5.500h5.500a2 2 0 0 1 4.500 0h5V11a2.200 2.200 0 0 1 0 4.500V21H4V16.500a3.300 3.300 0 0 0 0-6.500z" strokeWidth="2.200" strokeLinejoin="round" /></Line></Slot>
        </Row>
        <Row $ml={22}><VRule $w={3} $h={23} $c="#d3e3fd" /></Row>
        <Row $ml={26}>
          <Slot $w={26}><Line s={26}><path d="M2 5h12M2 10h12M2 15h8" strokeWidth="2.400" /><path d="M23 5h-4v12" strokeWidth="2.400" /><circle cx="16.800" cy="17.500" r="3.300" fill="#474747" stroke="none" /></Line></Slot>
        </Row>
        <Row $ml={26}><Avatar>A</Avatar></Row>
        <Row $ml={36}><DotsIcon c="#474747" r={2.300} gap={8} /></Row>
      </BrowserBar>
    </StripBack>
    <ChromeEdge />

    <Header>
      <Fill s={17} h={14} vb="0 0 17 14"><path d="M0 0h17v2.600H0zM0 5.700h17v2.600H0zM0 11.400h17V14H0z" /></Fill>
      <Brand>sumo logic</Brand>
      <Push />
      <GoTo>Go To...</GoTo>
      <Row $ml={3}>
        <Slot $w={38}>
          <Fill s={15}><circle cx="8" cy="8" r="7.600" /><text x="8" y="12.300" textAnchor="middle" fontFamily={arial} fontWeight="700" fontSize="12" fill="#1e2b45">?</text></Fill>
        </Slot>
        <Slot $w={38}><Gear s={15} /></Slot>
        <Slot $w={38}>
          <Fill s={16}><path d="M1.500 1.500h13V12H16v2.500H0V12h1.500zM3 3v9h10V3z" fillRule="evenodd" /><circle cx="8" cy="5.800" r="1.900" /><path d="M4.500 11.500c0-4 7-4 7 0z" /></Fill>
        </Slot>
      </Row>
      <Row $ml={4}><VRule $w={1} $h={24} $c="#3b4b68" /></Row>
      <Row $ml={9}><Account>Sumo Logic Training</Account></Row>
      <Row $ml={25}>
        <Fill><circle cx="8" cy="4.300" r="3.800" /><path d="M0 15c0-8 16-8 16 0z" /></Fill>
      </Row>
      <Slot $w={22} />
    </Header>

    <Body>
      <Side>
        {[HomeIcon, FolderIcon, HistoryIcon, StarIcon].map((I, i) => <SideItem key={i}><I /></SideItem>)}
        <SideRule />
        <SideItem><RobotIcon /></SideItem>
        <SideItem><LogsIcon /></SideItem>
        <SideItem><DashGlyph bg="#b9ccda" fg="#233553" /></SideItem>
        <SideRule />
        {[GaugeIcon, ShieldIcon, ShieldSearchIcon].map((I, i) => <SideItem key={i}><I /></SideItem>)}
        <SideRule />
        {[GridIcon, BellIcon, GearsIcon].map((I, i) => <SideItem key={i}><I /></SideItem>)}
        <SideRule />
        <SideItem><RocketIcon /></SideItem>
        <Push />
        <SideItem><SendIcon /></SideItem>
      </Side>

      <Main>
        <TitleBar>
          <DashMark><DashGlyph bg="#5f6cf0" fg="#f3f4ff" s={20} /></DashMark>
          <Title>Dashboard Aug 24, 2025 05:30:15</Title>
          <Row $ml={8}>
            <Fill s={15} c="#9bb2c6"><path d="M1 11.200L10 2.200l3.800 3.800-9 9H1zM11 1.300l1-1c.4-.4.900-.4 1.300 0l2.400 2.400c.4.4.4.900 0 1.300l-1 1z" /></Fill>
          </Row>
          <Saved>All changes saved</Saved>
          <Push />
          <ClockIcon />
          <Row $ml={6}><Range>-30d</Range></Row>
          <Row $ml={15}><RefreshIcon /></Row>
          <Row $ml={6}><Line s={12} h={8} c="#9bb2c6" vb="0 0 12 8"><path d="M1 1.500l5 5 5-5" strokeWidth="1.400" /></Line></Row>
          <Row $ml={18}><Fill s={14} c="#1f62e0" vb="0 0 14 15"><path d="M0 0h14v1.800H0zM0 3h14L8.700 8.500V15L5.300 12.500v-4z" /></Fill></Row>
          <Row $ml={17}><AddPanel>Add Panel</AddPanel></Row>
          <Row $ml={16}>
            <Line s={16} c="#9bb2c6" vb="0 0 16 16"><path d="M8.500 1.500H1.500v13h9.500V11" strokeWidth="1.500" /><path d="M5 11.500c0-4 2-6 6-6" strokeWidth="2" /><path d="M10.500 2L15.500 5.700l-5 3.700z" fill="#9bb2c6" stroke="none" /></Line>
          </Row>
          <Row $ml={22}><DotsIcon /></Row>
          <Slot $w={19} />
        </TitleBar>

        <FilterBar>
          <FilterName $w={77}>Event_type</FilterName>
          <FilterValue>*</FilterValue>
          <Row $ml={40}><FilterName $w={40}>Actor</FilterName></Row>
          <FilterValue>*</FilterValue>
          <Row $ml={30}>
            <Plus><Line s={12} c="#9bb2c6" vb="0 0 12 12"><path d="M6 0v12M0 6h12" /></Line></Plus>
          </Row>
        </FilterBar>

        <Scroller>
          <Panels>
            <ChartPanel>
              <GhostHead>
                <Row $gap={2}><VRule $w={1} $h={16} $c="#a9bccb" /><VRule $w={1} $h={16} $c="#a9bccb" /></Row>
                <GhostTitle $ml={7}>Top 50 User Activity</GhostTitle>
                <Push />
                <RefreshIcon c="#b3c4d3" s={15} />
                <Row $ml={6}><ClockIcon c="#b3c4d3" /></Row>
                <Row $ml={8}><GhostTitle>-30d</GhostTitle></Row>
                <Row $ml={4}><DotsIcon c="#b3c4d3" /></Row>
                <Slot $w={17} />
              </GhostHead>
              <Chart />
            </ChartPanel>
            <MapPanel>
              <MapHead>
                <PanelTitle $w={212}>Geo Location of Console Logins</PanelTitle>
                <Fill s={16} h={14} c="#8fa6bc" vb="0 0 16 14"><path d="M8 0l8 14H0z" /><path d="M7.200 4.500h1.600v5H7.200zM7.200 10.500h1.600V12H7.200z" fill="#fff" /></Fill>
                <Push />
                <ClockIcon />
                <Row $ml={6}><PanelTitle $w={71}>This Month</PanelTitle></Row>
              </MapHead>
              <MapBox>
                <WorldMap />
                <MapLegend>
                  <LegendTitle>_count</LegendTitle>
                  <LegendRow $c="#90c400">&lt; 7.5</LegendRow>
                  <LegendRow $c="#fecb1e">7.5 - 377</LegendRow>
                  <LegendRow $c="#e64a00">&gt;= 378</LegendRow>
                </MapLegend>
                <Attribution>© Mapbox © OpenStreetMap <b>Improve this map</b></Attribution>
              </MapBox>
            </MapPanel>
          </Panels>
          <ScrollTrack>
            <Fill s={14} h={12} c="#b5c9d9" vb="0 0 14 12"><path d="M7 0q1 0 1.600 1L14 10.500q0 1.500-1 1.500H1q-1 0-1-1.500L5.400 1Q6 0 7 0z" /></Fill>
            <Thumb />
            <Fill s={14} h={12} c="#b5c9d9" vb="0 0 14 12"><path d="M7 12q1 0 1.600-1L14 1.500Q14 0 13 0H1Q0 0 0 1.500L5.400 11Q6 12 7 12z" /></Fill>
          </ScrollTrack>
        </Scroller>
      </Main>
    </Body>

    <Tooltip>
      <TipValue>12.46k</TipValue>
      michel<br />AwsApiCall
    </Tooltip>

    <TaskBar>
      <Weather><WeatherIcon /></Weather>
      <TaskItem><WindowsIcon /></TaskItem>
      <SearchBox>
        <Line s={24} c="#262626"><circle cx="10" cy="10" r="8" strokeWidth="2.400" /><path d="M15.500 15.500L22 22.500" strokeWidth="2.800" /></Line>
        <Row $ml={14}>Search</Row>
        <Push />
        <Deer />
      </SearchBox>
      <TaskItem><TaskView /></TaskItem>
      <TaskItem $active><Chrome /><Running $w={24} $c="#0078d4" /></TaskItem>
      <TaskItem $drop={2}><Copilot /></TaskItem>
      <TaskItem><Explorer /></TaskItem>
      <TaskItem><Edge /></TaskItem>
      <TaskItem><Store /></TaskItem>
      <TaskItem $drop={1}><Outlook /></TaskItem>
      <TaskItem $drop={1}><Word /></TaskItem>
      <TaskItem><Snip /></TaskItem>
      <TaskItem $drop={3}><Terminal /></TaskItem>
      <TaskItem $drop={1}><VBox /></TaskItem>
      <TaskItem><Notepad /><Running $w={9} $c="#7b7b7f" /></TaskItem>
      <Push />
      <Line s={18} h={10} c="#1b1b1b" vb="0 0 18 10"><path d="M1.500 9L9 1.500 16.500 9" /></Line>
      <Row $ml={27}>
        <Line s={24} h={18} c="#1b1b1b" vb="0 0 24 18">
          <path d="M1 7a15 15 0 0 1 22 0" stroke="#adafb3" strokeWidth="1.500" /><path d="M4 9.500a11.500 11.500 0 0 1 16 0M7.500 12.500a6.500 6.500 0 0 1 9 0" strokeWidth="1.600" /><circle cx="12" cy="15.500" r="2" fill="#1b1b1b" stroke="none" />
        </Line>
      </Row>
      <Row $ml={12}>
        <Line s={24} h={20} c="#1b1b1b" vb="0 0 24 20">
          <path d="M1 6.500h4L10.500 2v16L5 13.500H1z" strokeWidth="1.600" strokeLinejoin="round" /><path d="M13 6.500q2 3.500 0 7" strokeWidth="1.600" /><path d="M16 4q4 6 0 12M19 1.500q6 8.500 0 17" stroke="#a9abaf" strokeWidth="1.500" />
        </Line>
      </Row>
      <Row $ml={12}>
        <Line s={24} h={15} c="#1b1b1b" vb="0 0 24 15">
          <rect x="1" y="1" width="20" height="13" rx="2.500" strokeWidth="1.800" /><path d="M3 3.500h6v8.500H3zM22 5.500h2v4h-2z" fill="#1b1b1b" stroke="none" />
        </Line>
      </Row>
      <Clock>5:59 pm<br />24/08/2025</Clock>
    </TaskBar>
  </Screen>
);

export default App;
